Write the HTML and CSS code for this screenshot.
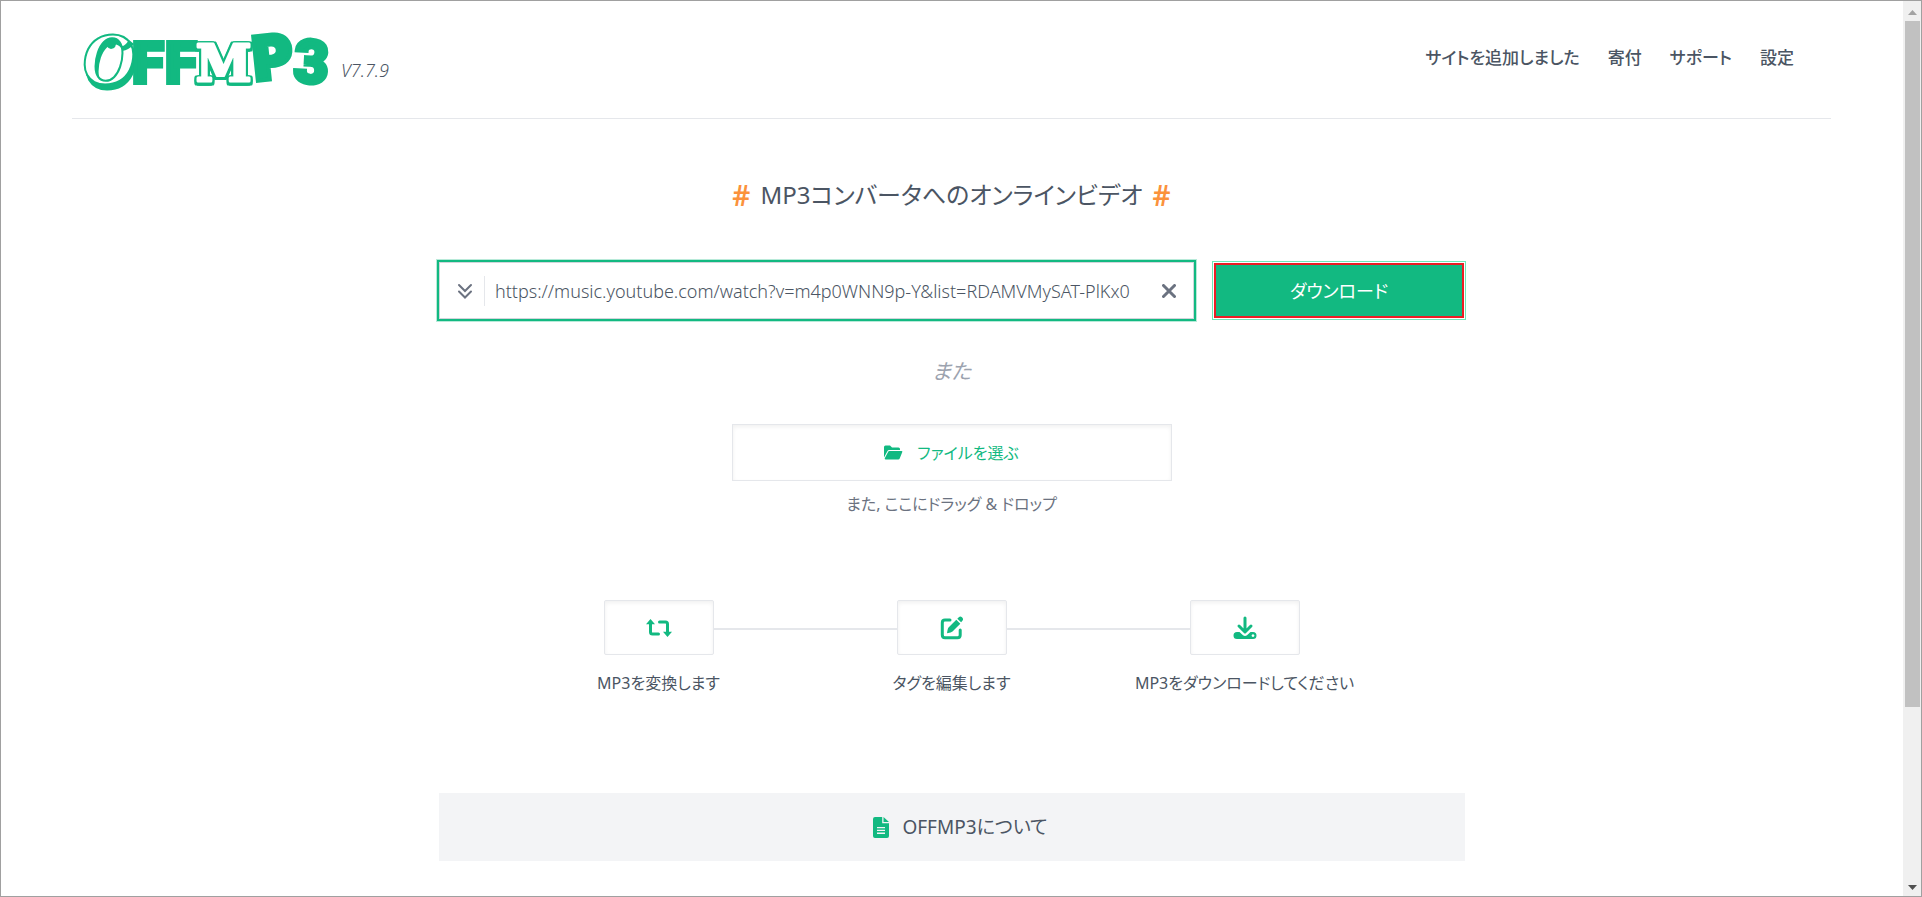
FILE: index.html
```html
<!DOCTYPE html>
<html lang="ja">
<head>
<meta charset="utf-8">
<meta name="viewport" content="width=device-width, initial-scale=1">
<title>OFFMP3</title>
<link rel="stylesheet" href="styles.css">
</head>
<body>
<div class="window">
  <div class="page">
    <header class="header">
      <a class="brand" href="#">
        <svg class="logo" viewBox="0 0 248 62" role="img" aria-label="OFFMP3">
          <text class="logo-script" x="1" y="53" font-size="74">O</text>
          <path class="logo-curl" d="M26 9q6-4 9 1 1 7-5 8-6-1-4-9zM41 20q7-1 12-7l-5-4q-4 6-7 6z"/>
          <g class="logo-solid">
            <text x="51" y="52" font-size="58">F</text>
            <text x="84" y="52" font-size="58">F</text>
          </g>
          <text class="logo-block" x="115" y="50" font-size="50">M</text>
          <g class="logo-solid">
            <text class="logo-wide" x="174" y="50" font-size="61" transform="rotate(-6 174 50)">P</text>
            <text x="212" y="51" font-size="60" transform="rotate(3 212 51)">3</text>
          </g>
        </svg>
        <span class="version">V7.7.9</span>
      </a>
      <nav class="nav">
        <a href="#">サイトを追加しました</a>
        <a href="#">寄付</a>
        <a href="#">サポート</a>
        <a href="#">設定</a>
      </nav>
    </header>
    <main class="main">
      <h1 class="title"><span class="hash">#</span><span>MP3コンバータへのオンラインビデオ</span><span class="hash">#</span></h1>
      <form class="search">
        <div class="field">
          <button class="icon-button expand" type="button" aria-label="オプション">
            <svg width="16" height="18" viewBox="0 0 16 18"><path d="M2 3l6 6 6-6M2 9.500l6 6 6-6"/></svg>
          </button>
          <input class="url" type="text" aria-label="URL" value="https://music.youtube.com/watch?v=m4p0WNN9p-Y&amp;list=RDAMVMySAT-PlKx0">
          <button class="icon-button clear" type="button" aria-label="クリア">
            <svg width="14" height="14" viewBox="0 0 14 14"><path d="M1.500 1.500l11 11M12.500 1.500l-11 11"/></svg>
          </button>
        </div>
        <button class="download" type="button"><span>ダウンロード</span></button>
      </form>
      <p class="or">また</p>
      <button class="choose" type="button">
        <svg width="19" height="15" viewBox="0 0 19 15"><path d="M0 2Q0 .5 1.500 .5H6l2 2h6.500Q16 2.500 16 4v1H5Q4 5 3.500 6L0 12.500zM5.300 6h12.200q1.200 0 .8 1.100l-2.600 6.300q-.4 1-1.500 1H1.500Q.3 14.400.8 13.300L4.200 6.700Q4.500 6 5.300 6z"/></svg>
        <span>ファイルを選ぶ</span>
      </button>
      <p class="hint">また, ここにドラッグ &amp; ドロップ</p>
      <ol class="steps">
        <li class="step">
          <div class="step-box">
            <svg width="26" height="18" viewBox="0 0 26 18"><g class="stroke"><path d="M4.500 4v9q0 2 2 2H12.500M13.500 3h6q2 0 2 2v9"/></g><path d="M4.500 0L9 5.300H0zM21.500 18l4.500-5.300h-9z"/></svg>
          </div>
          <span>MP3を変換します</span>
        </li>
        <li class="step">
          <div class="step-box">
            <svg width="24" height="24" viewBox="0 0 24 24"><g class="stroke"><path d="M10 4H5Q2.300 4 2.300 6.700v12Q2.300 21.700 5 21.700H17.500Q20.200 21.700 20.200 19V14"/></g><path d="M16.300 3.700l4 4L12.500 15.500Q11.500 16.500 7 17.300 7.600 12.500 8.500 11.500zM17.300 2.700l1.500-1.500q1.500-1.500 3.200.1 1.900 1.800.4 3.400l-1.300 1.500z"/></svg>
          </div>
          <span>タグを編集します</span>
        </li>
        <li class="step">
          <div class="step-box">
            <svg width="24" height="24" viewBox="0 0 24 24"><g class="stroke"><path d="M12 2v13M6 10l6 6 6-6"/></g><path fill-rule="evenodd" d="M4 16h2.500l3.500 3.200q2 1.600 4 0L17.500 16H20q3.500 0 3.500 3.500T20 23H4Q.5 23 .5 19.500T4 16zM20 18.200a1.400 1.400 0 1 0 .01 0z"/></svg>
          </div>
          <span>MP3をダウンロードしてください</span>
        </li>
      </ol>
      <button class="about" type="button">
        <svg width="16" height="21" viewBox="0 0 16 21"><path fill-rule="evenodd" d="M2 0H9.200V6.200H16V19q0 2-2 2H2q-2 0-2-2V2Q0 0 2 0zM4 10v1.300h8V10zM4 12.800v1.300h8v-1.300zM4 15.600v1.300h8v-1.300zM10.500 0L16 5H10.500z"/></svg>
        <span>OFFMP3について</span>
      </button>
    </main>
  </div>
  <div class="scrollbar" aria-hidden="true">
    <svg class="scroll-arrow up" width="9" height="5" viewBox="0 0 9 5"><path d="M0 5L4.500 0 9 5z"/></svg>
    <div class="track"><div class="thumb"></div></div>
    <svg class="scroll-arrow" width="9" height="5" viewBox="0 0 9 5"><path d="M0 0h9L4.500 5z"/></svg>
  </div>
</div>
</body>
</html>
```

FILE: styles.css
```css
:root {
  --green: #12b981;
  --ink: #4b5563;
  --muted: #6b7280;
  --line: #e5e7eb;
}

* { box-sizing: border-box; }

body {
  margin: 0;
  color: var(--ink);
  background: #fff;
  font: 16px/24px "Noto Sans", "Noto Sans CJK JP", sans-serif;
  font-feature-settings: "palt";
}

button, input {
  margin: 0;
  padding: 0;
  border: 0;
  background: none;
  color: inherit;
  font: inherit;
  font-feature-settings: inherit;
}

button { cursor: pointer; }
a { color: inherit; text-decoration: none; }
p, h1, ol { margin: 0; }

.window {
  display: flex;
  min-height: 100vh;
  border: 1px solid #a0a0a0;
}

.page { flex: 1; padding: 0 72px 0 71px; }

.header {
  display: flex;
  justify-content: space-between;
  align-items: flex-start;
  height: 118px;
  padding: 30px 37px 0 9px;
  border-bottom: 1px solid var(--line);
}

.brand { display: flex; gap: 12px; }
.logo { width: 248px; height: 62px; overflow: visible; }
.logo text { font-family: Roboto, sans-serif; font-weight: 900; }
.logo .logo-wide { font-family: Inter, sans-serif; }
.logo-solid text { fill: var(--green); stroke: var(--green); stroke-width: 4; }

.logo .logo-script {
  fill: #fff;
  stroke: var(--green);
  stroke-width: 2;
  font-family: "Liberation Serif", serif;
  font-style: italic;
  font-weight: 700;
  filter: drop-shadow(2px 5px 0 var(--green));
}

.logo-curl { fill: var(--green); }

.logo .logo-block {
  fill: #fff;
  stroke: #fff;
  stroke-width: 3;
  stroke-linejoin: round;
  font-family: "DejaVu Serif", serif;
  font-weight: 700;
  filter: drop-shadow(2px 0 0 var(--green)) drop-shadow(-2px 0 0 var(--green)) drop-shadow(0 -1px 0 var(--green)) drop-shadow(0 3px 0 var(--green));
}

.version {
  padding-top: 27px;
  color: var(--ink);
  font-size: 18px;
  font-style: italic;
  font-weight: 300;
}

.nav {
  display: flex;
  gap: 28px;
  padding-top: 15px;
  font-size: 17px;
  font-weight: 500;
}

.main {
  display: flex;
  flex-direction: column;
  align-items: center;
  width: 100%;
  max-width: 1029px;
  margin: 0 auto;
  padding-top: 58px;
}

.title {
  display: flex;
  gap: 10px;
  font-size: 24px;
  line-height: 36px;
  font-weight: 400;
}

.hash { color: #fb923c; font-size: 28px; font-weight: 600; }

.search {
  display: flex;
  align-items: center;
  gap: 16px;
  width: 100%;
  margin-top: 47px;
}

.field {
  display: flex;
  flex: 1;
  align-items: center;
  height: 61px;
  padding: 0 18px;
  border: 2px solid var(--green);
  box-shadow: 0 0 0 1px #b8ead9, inset 0 0 0 1px #d1d5db;
}

.icon-button { display: flex; }
.icon-button path { fill: none; stroke: var(--muted); stroke-width: 2; stroke-linecap: round; }
.icon-button.expand { padding: 6px 11px 6px 0; border-right: 1px solid var(--line); }
.icon-button.clear path { stroke-width: 3; }

.url {
  flex: 1;
  min-width: 0;
  height: 40px;
  margin: 0 24px 0 10px;
  color: var(--ink);
  font-size: 18px;
  font-weight: 300;
  outline: 0;
}

.download {
  width: 254px;
  height: 59px;
  border: 1px solid #6ee7b7;
  padding: 1px;
  color: #fff;
  font-size: 18px;
}

.download span {
  display: flex;
  align-items: center;
  justify-content: center;
  height: 100%;
  border: 2px solid #ed1c24;
  background: var(--green);
}

.or {
  margin-top: 34px;
  color: #9ca3af;
  font-size: 21px;
  line-height: 32px;
  font-style: italic;
}

.choose {
  display: flex;
  align-items: center;
  justify-content: center;
  gap: 14px;
  width: 440px;
  height: 57px;
  margin-top: 37px;
  border: 1px solid var(--line);
  box-shadow: inset 0 2px 4px rgba(0, 0, 0, 0.06);
  color: var(--green);
}

.choose path, .step-box path, .about path { fill: var(--green); }
.hint { margin-top: 11px; color: var(--muted); }

.steps {
  display: grid;
  grid-template-columns: repeat(3, 293px);
  margin-top: 84px;
  padding: 0;
  list-style: none;
}

.step {
  display: flex;
  flex-direction: column;
  align-items: center;
  gap: 16px;
}

.step-box {
  position: relative;
  display: flex;
  align-items: center;
  justify-content: center;
  width: 110px;
  height: 55px;
  border: 1px solid var(--line);
  border-radius: 2px;
  box-shadow: inset 0 2px 4px rgba(0, 0, 0, 0.06);
}

.step + .step .step-box::before {
  content: "";
  position: absolute;
  right: 109px;
  top: 27px;
  width: 183px;
  height: 2px;
  background: var(--line);
}

.step-box .stroke path { fill: none; stroke: var(--green); stroke-width: 3; stroke-linecap: round; stroke-linejoin: round; }

.about {
  display: flex;
  align-items: center;
  justify-content: center;
  gap: 13px;
  width: 1026px;
  max-width: 100%;
  height: 68px;
  margin-top: 98px;
  padding-left: 18px;
  background: #f3f4f6;
  font-size: 19px;
}

.scrollbar {
  display: flex;
  flex-direction: column;
  align-items: center;
  width: 18px;
  padding: 9px 0 6px;
  background: #f0f0f0;
}

.scroll-arrow path { fill: #505050; }
.scroll-arrow.up path { fill: #a3a3a3; }
.track { flex: 1; width: 15px; padding: 6px 0; }
.thumb { height: 80%; background: #c1c1c1; }
```
